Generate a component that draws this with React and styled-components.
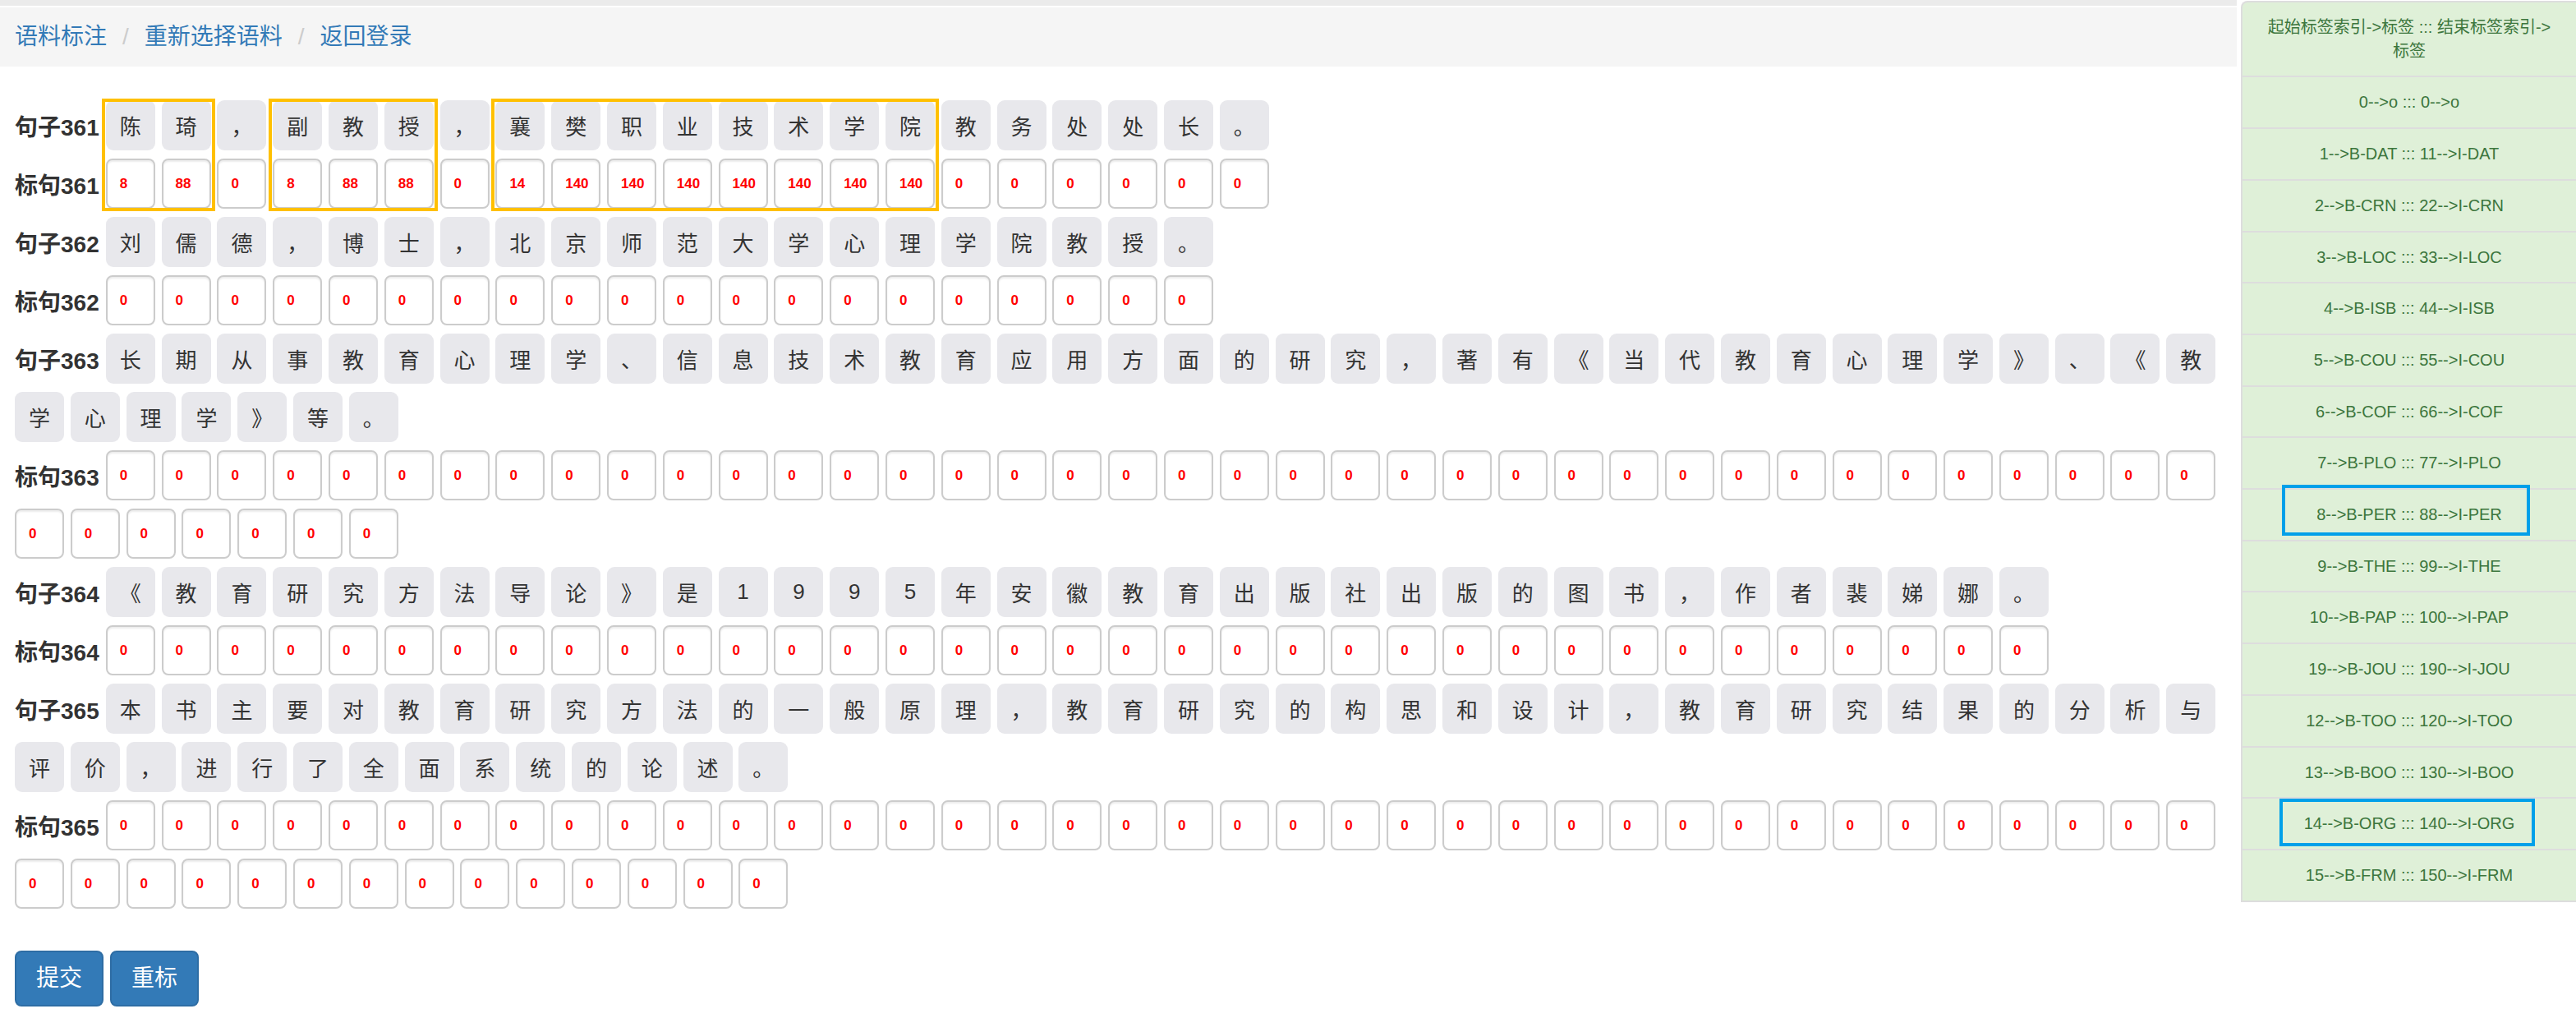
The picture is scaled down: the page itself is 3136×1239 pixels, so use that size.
import React from 'react';
import styled, { createGlobalStyle } from 'styled-components';

const GlobalStyle = createGlobalStyle`
  html, body {
    margin: 0;
    padding: 0;
    background: #fff;
  }
  body {
    font-family: "Liberation Sans", "Noto Sans CJK SC", sans-serif;
    color: #333;
  }
`;

const CELL_W = 60;
const GAP = 7.8;
const LABEL_W = 103;
const PAD = 18;

const Page = styled.div`
  display: flex;
  align-items: flex-start;
  width: 3136px;
`;

const Main = styled.div`
  width: 2723px;
  flex-shrink: 0;
`;

const TopStrip = styled.div`
  height: 7px;
  background: #ebebeb;
  margin-bottom: 2px;
`;

const Breadcrumb = styled.ol`
  list-style: none;
  margin: 0 0 41px 0;
  padding: 16px 18px;
  background: #f5f5f5;
  display: flex;
  align-items: center;
  font-size: 28px;
  line-height: 40px;
`;

const Crumb = styled.li`
  color: #337ab7;
`;

const Sep = styled.li`
  color: #ccc;
  padding: 0 19px;
`;

const Sentences = styled.div`
  padding: 0 ${PAD}px;
  display: flex;
  flex-direction: column;
  gap: 10px;
`;

const Group = styled.div`
  position: relative;
  display: flex;
  flex-direction: column;
  gap: 10px;
`;

const Row = styled.div`
  display: flex;
  flex-wrap: wrap;
  align-items: center;
  column-gap: ${GAP}px;
  row-gap: 10px;
`;

const Label = styled.div`
  width: ${LABEL_W}px;
  font-size: 28px;
  font-weight: bold;
  white-space: nowrap;
  color: #333;
`;

const CharCell = styled.div`
  width: ${CELL_W}px;
  height: 61px;
  box-sizing: border-box;
  border-radius: 9px;
  background: #e8e8ec;
  display: flex;
  align-items: center;
  justify-content: center;
  font-size: 26px;
  color: #333;
`;

const TagCell = styled.div`
  width: ${CELL_W}px;
  height: 61px;
  box-sizing: border-box;
  border: 2px solid #ccc;
  border-radius: 8px;
  background: #fff;
  box-shadow: inset 0 2px 2px rgba(0, 0, 0, 0.075);
  display: flex;
  align-items: center;
  padding-left: 15px;
  font-size: 17px;
  font-weight: bold;
  color: #f00;
`;

const Highlight = styled.div`
  position: absolute;
  top: -2px;
  height: 137px;
  box-sizing: border-box;
  border: 4px solid #ffc000;
  pointer-events: none;
`;

const Actions = styled.div`
  display: flex;
  gap: 8px;
  padding: 0 ${PAD}px;
  margin-top: 51px;
`;

const Button = styled.button`
  font-family: inherit;
  font-size: 28px;
  line-height: 40px;
  padding: 12px 24px;
  color: #fff;
  background: #337ab7;
  border: 2px solid #2e6da4;
  border-radius: 8px;
`;

const Panel = styled.div`
  flex: 1;
  margin-left: 5px;
  margin-top: 1px;
  border-left: 2px solid #ddd;
  border-top: 2px solid #ddd;
  border-top-left-radius: 8px;
  background: #dff0d8;
`;

const PanelRow = styled.div`
  position: relative;
  padding: 16px;
  border-bottom: 2px solid #ddd;
  text-align: center;
  font-size: 20px;
  line-height: 28.7px;
  color: #3c763d;
`;

const Marker = styled.div`
  position: absolute;
  box-sizing: border-box;
  border: 4px solid #00a0e9;
  pointer-events: none;
`;

const sentences = [
  {
    id: 361,
    text: '陈琦，副教授，襄樊职业技术学院教务处处长。',
    tags: [8, 88, 0, 8, 88, 88, 0, 14, 140, 140, 140, 140, 140, 140, 140, 0, 0, 0, 0, 0, 0],
    boxes: [[0, 1], [3, 5], [7, 14]]
  },
  { id: 362, text: '刘儒德，博士，北京师范大学心理学院教授。' },
  {
    id: 363,
    text: '长期从事教育心理学、信息技术教育应用方面的研究，著有《当代教育心理学》、《教学心理学》等。'
  },
  { id: 364, text: '《教育研究方法导论》是1995年安徽教育出版社出版的图书，作者裴娣娜。' },
  {
    id: 365,
    text: '本书主要对教育研究方法的一般原理，教育研究的构思和设计，教育研究结果的分析与评价，进行了全面系统的论述。'
  }
];

const legend = [
  { text: '0-->o ::: 0-->o' },
  { text: '1-->B-DAT ::: 11-->I-DAT' },
  { text: '2-->B-CRN ::: 22-->I-CRN' },
  { text: '3-->B-LOC ::: 33-->I-LOC' },
  { text: '4-->B-ISB ::: 44-->I-ISB' },
  { text: '5-->B-COU ::: 55-->I-COU' },
  { text: '6-->B-COF ::: 66-->I-COF' },
  { text: '7-->B-PLO ::: 77-->I-PLO' },
  { text: '8-->B-PER ::: 88-->I-PER', mark: { top: -6, left: 48, width: 302, height: 62 } },
  { text: '9-->B-THE ::: 99-->I-THE' },
  { text: '10-->B-PAP ::: 100-->I-PAP' },
  { text: '19-->B-JOU ::: 190-->I-JOU' },
  { text: '12-->B-TOO ::: 120-->I-TOO' },
  { text: '13-->B-BOO ::: 130-->I-BOO' },
  { text: '14-->B-ORG ::: 140-->I-ORG', mark: { top: 0, left: 45, width: 311, height: 58 } },
  { text: '15-->B-FRM ::: 150-->I-FRM' }
];

const cellLeft = i => LABEL_W + GAP + i * (CELL_W + GAP);

const SentenceGroup = ({ item }) => {
  const chars = Array.from(item.text);
  const tags = item.tags || chars.map(() => 0);

  return (
    <Group>
      <Row>
        <Label>句子{item.id}</Label>
        {chars.map((c, i) => (
          <CharCell key={i}>{c}</CharCell>
        ))}
      </Row>
      <Row>
        <Label>标句{item.id}</Label>
        {tags.map((t, i) => (
          <TagCell key={i}>{t}</TagCell>
        ))}
      </Row>
      {(item.boxes || []).map(([a, b]) => (
        <Highlight
          key={a}
          style={{ left: cellLeft(a) - 5, width: cellLeft(b) + CELL_W + 5 - (cellLeft(a) - 5) }}
        />
      ))}
    </Group>
  );
};

const App = () => {
  return (
    <Page>
      <GlobalStyle />
      <Main>
        <TopStrip />
        <Breadcrumb>
          <Crumb>语料标注</Crumb>
          <Sep>/</Sep>
          <Crumb>重新选择语料</Crumb>
          <Sep>/</Sep>
          <Crumb>返回登录</Crumb>
        </Breadcrumb>

        <Sentences>
          {sentences.map(s => (
            <SentenceGroup key={s.id} item={s} />
          ))}
        </Sentences>

        <Actions>
          <Button type='button'>提交</Button>
          <Button type='button'>重标</Button>
        </Actions>
      </Main>

      <Panel>
        <PanelRow>
          起始标签索引-&gt;标签 ::: 结束标签索引-&gt;
          <br />
          标签
        </PanelRow>
        {legend.map(l => (
          <PanelRow key={l.text}>
            {l.text}
            {l.mark && <Marker style={l.mark} />}
          </PanelRow>
        ))}
      </Panel>
    </Page>
  );
};

export default App;
